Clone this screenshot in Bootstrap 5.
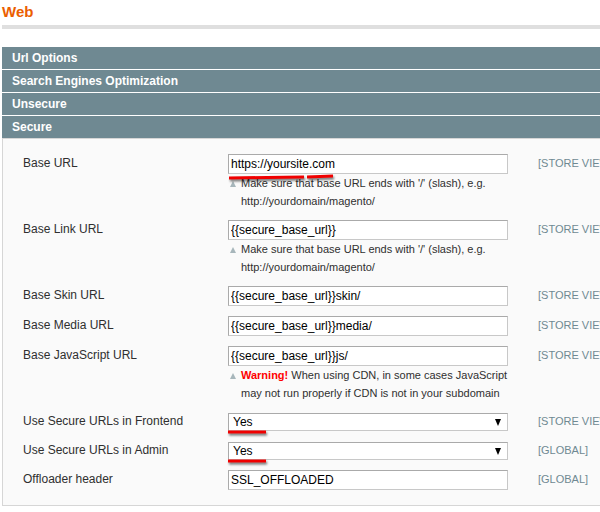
<!DOCTYPE html>
<html lang="en">
<head>
<meta charset="utf-8">
<meta name="viewport" content="width=device-width, initial-scale=1">
<title>Web</title>
<link href="https://cdn.jsdelivr.net/npm/bootstrap@5.3.0/dist/css/bootstrap.min.css" rel="stylesheet">
<style>
body{font-family:"Liberation Sans",Arial,sans-serif;font-size:12px;line-height:18px;color:#2f2f2f;background:#fff;overflow-x:hidden}
.config-page{padding-left:2px}
.page-title{font-size:15px;line-height:18px;color:#eb5e00;padding:3px 0 4px;border-bottom:4px solid #dfdfdf;margin-bottom:18px}
.section-bar{background:#6f8992;margin-bottom:1px;line-height:22px;padding-left:10px;font-size:12px}
.section-bar:last-of-type{margin-bottom:0}
.settings{background:#fafafa;border:1px solid #d6d6d6;border-right:0;padding:10px 0 10px 20px}
.setting{padding:5px 0}
.setting-name{width:205px}
.setting-value{width:280px}
.setting-scope{padding-left:30px;font-size:11px;color:#6f8992}
.field{height:20px;padding:0 2px;font-size:12px;line-height:18px;color:#000;border:1px solid;border-color:#aaa #c8c8c8 #c8c8c8 #aaa;border-radius:0;background:#fff}
.field:focus{box-shadow:none;border-color:#6f8992}
.pick{margin-top:1px}
select.field{height:18px;line-height:16px;padding:0 4px}
.pick .arrow{right:6px;top:6px;pointer-events:none}
.hint{font-size:11px;padding-left:13px}
.hint .tip{left:1px;top:7px}
.warn{color:#f00}
.stroke{left:0;top:16px;pointer-events:none;filter:drop-shadow(1px 2px 1px #0008)}
.url .stroke{top:20px;z-index:1}
</style>
<script src="https://cdn.jsdelivr.net/npm/bootstrap@5.3.0/dist/js/bootstrap.bundle.min.js"></script>
</head>
<body>
<main class="config-page">
<h1 class="page-title fw-bold">Web</h1>
<nav aria-label="Sections">
<a class="section-bar d-block fw-bold text-white text-decoration-none" href="#url">Url Options</a>
<a class="section-bar d-block fw-bold text-white text-decoration-none" href="#seo">Search Engines Optimization</a>
<a class="section-bar d-block fw-bold text-white text-decoration-none" href="#unsecure">Unsecure</a>
<a class="section-bar d-block fw-bold text-white text-decoration-none" href="#secure">Secure</a>
</nav>
<form class="settings" id="secure">
<div class="setting d-flex">
<label class="setting-name flex-shrink-0" for="base">Base URL</label>
<div class="setting-value url flex-shrink-0 position-relative">
<input class="field form-control" id="base" type="text" value="https://yoursite.com">
<svg class="stroke position-absolute" width="110" height="8" viewBox="0 0 110 8" aria-hidden="true"><path d="M1 4L76 3M79 3L105 2" stroke="#f00000" stroke-width="3" fill="none"/></svg>
<div class="hint position-relative"><svg class="tip position-absolute" width="8" height="6" aria-hidden="true"><path d="M4 0L7 6H1Z" fill="#a7b6bb"/></svg>Make sure that base URL ends with '/' (slash), e.g. http://yourdomain/magento/</div>
</div>
<span class="setting-scope text-nowrap">[STORE VIEW]</span>
</div>
<div class="setting d-flex">
<label class="setting-name flex-shrink-0" for="link">Base Link URL</label>
<div class="setting-value flex-shrink-0">
<input class="field form-control" id="link" type="text" value="{{secure_base_url}}">
<div class="hint position-relative"><svg class="tip position-absolute" width="8" height="6" aria-hidden="true"><path d="M4 0L7 6H1Z" fill="#a7b6bb"/></svg>Make sure that base URL ends with '/' (slash), e.g. http://yourdomain/magento/</div>
</div>
<span class="setting-scope text-nowrap">[STORE VIEW]</span>
</div>
<div class="setting d-flex">
<label class="setting-name flex-shrink-0" for="skin">Base Skin URL</label>
<div class="setting-value flex-shrink-0"><input class="field form-control" id="skin" type="text" value="{{secure_base_url}}skin/"></div>
<span class="setting-scope text-nowrap">[STORE VIEW]</span>
</div>
<div class="setting d-flex">
<label class="setting-name flex-shrink-0" for="media">Base Media URL</label>
<div class="setting-value flex-shrink-0"><input class="field form-control" id="media" type="text" value="{{secure_base_url}}media/"></div>
<span class="setting-scope text-nowrap">[STORE VIEW]</span>
</div>
<div class="setting d-flex">
<label class="setting-name flex-shrink-0" for="js">Base JavaScript URL</label>
<div class="setting-value flex-shrink-0">
<input class="field form-control" id="js" type="text" value="{{secure_base_url}}js/">
<div class="hint position-relative"><svg class="tip position-absolute" width="8" height="6" aria-hidden="true"><path d="M4 0L7 6H1Z" fill="#a7b6bb"/></svg><strong class="warn">Warning!</strong> When using CDN, in some cases JavaScript may not run properly if CDN is not in your subdomain</div>
</div>
<span class="setting-scope text-nowrap">[STORE VIEW]</span>
</div>
<div class="setting d-flex">
<label class="setting-name flex-shrink-0" for="front">Use Secure URLs in Frontend</label>
<div class="setting-value flex-shrink-0"><div class="pick position-relative">
<select class="field form-control" id="front"><option>Yes</option><option>No</option></select>
<svg class="arrow position-absolute" width="8" height="7" aria-hidden="true"><path d="M1 0H7L4 7Z" fill="#000"/></svg>
<svg class="stroke position-absolute" width="42" height="7" aria-hidden="true"><path d="M0 3H38" stroke="#f00000" stroke-width="3"/></svg>
</div></div>
<span class="setting-scope text-nowrap">[STORE VIEW]</span>
</div>
<div class="setting d-flex">
<label class="setting-name flex-shrink-0" for="admin">Use Secure URLs in Admin</label>
<div class="setting-value flex-shrink-0"><div class="pick position-relative">
<select class="field form-control" id="admin"><option>Yes</option><option>No</option></select>
<svg class="arrow position-absolute" width="8" height="7" aria-hidden="true"><path d="M1 0H7L4 7Z" fill="#000"/></svg>
<svg class="stroke position-absolute" width="42" height="7" aria-hidden="true"><path d="M0 3H38" stroke="#f00000" stroke-width="3"/></svg>
</div></div>
<span class="setting-scope text-nowrap">[GLOBAL]</span>
</div>
<div class="setting d-flex">
<label class="setting-name flex-shrink-0" for="offload">Offloader header</label>
<div class="setting-value flex-shrink-0"><input class="field form-control" id="offload" type="text" value="SSL_OFFLOADED"></div>
<span class="setting-scope text-nowrap">[GLOBAL]</span>
</div>
</form>
</main>
</body>
</html>
